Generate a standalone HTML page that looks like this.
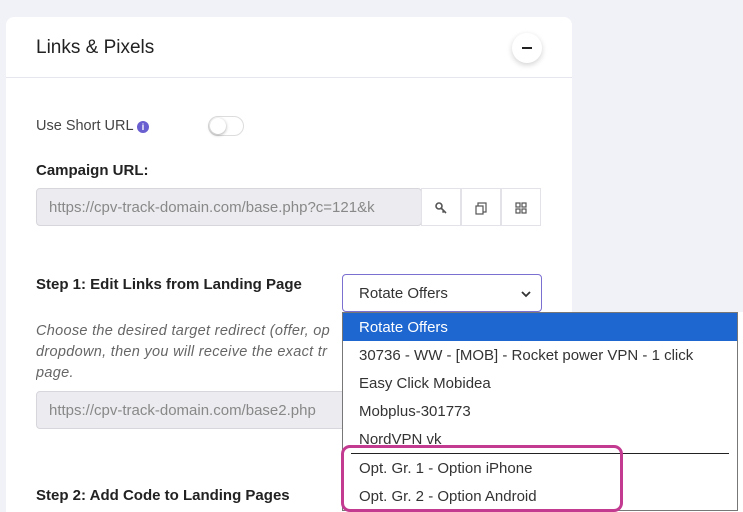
<!DOCTYPE html>
<html style="width:743px;height:512px;overflow:hidden"><head><style>
*{box-sizing:border-box;margin:0;padding:0}
body{width:743px;height:512px;overflow:hidden;background:#f1f1f8;font-family:"Liberation Sans",sans-serif;position:relative;color:#222}
.abs{position:absolute}
.card{left:6px;top:17px;width:566px;height:495px;background:#fff;border-radius:8px 8px 0 0}
.hdr{left:6px;top:77px;width:566px;height:1px;background:#e6e6ee}
.t{font-size:19px;color:#222;left:36px;top:37px}
.min{left:512px;top:33px;width:30px;height:30px;border-radius:50%;background:#fff;box-shadow:0 2px 6px rgba(0,0,0,.18)}
.min:after{content:"";position:absolute;left:10px;top:14px;width:10px;height:2px;background:#222}
.lbl{font-size:14.5px;color:#444}
.b{font-weight:bold;font-size:15px;color:#222}
.inp{background:#ececf0;border:1px solid #d6d6dc;border-radius:4px;color:#888;font-size:15px;padding:10px 12px;white-space:nowrap;overflow:hidden}
.btn{top:188px;width:40px;height:38px;border:1px solid #e2e2e8;background:#fff;color:#666;font-size:13px;text-align:center;line-height:36px}
.it{font-style:italic;color:#666;font-size:14.5px;line-height:21px;letter-spacing:.3px}
.dd{left:342px;top:312px;width:396px;height:199px;background:#fff;border:1px solid #777;overflow:hidden}
.dd div{height:28px;line-height:30px;padding-left:16px;font-size:15px;color:#333;white-space:nowrap}
</style></head><body>
<div class="abs card"></div>
<div class="abs" style="left:572px;top:312px;width:171px;height:200px;background:#fff"></div>
<div class="abs hdr"></div>
<div class="abs t">Links &amp; Pixels</div>
<div class="abs min"></div>
<div class="abs lbl" style="left:36px;top:118px">Use Short URL <span style="display:inline-block;width:12px;height:12px;border-radius:50%;background:#6a5fd0;color:#fff;font-size:9px;text-align:center;line-height:12px;font-weight:bold">i</span></div>
<div class="abs" style="left:208px;top:116px;width:36px;height:20px;border:1px solid #ddd;border-radius:10px;background:#fff"><div style="position:absolute;left:1px;top:1px;width:16px;height:16px;border-radius:50%;background:#fff;box-shadow:0 1px 3px rgba(0,0,0,.35)"></div></div>
<div class="abs b" style="left:36px;top:162px">Campaign URL:</div>
<div class="abs inp" style="left:36px;top:188px;width:386px;height:38px">https://cpv-track-domain.com/base.php?c=121&amp;k</div>
<div class="abs btn" style="left:421px">
<svg width="14" height="14" viewBox="0 0 14 14" style="margin-top:12px"><circle cx="5" cy="5" r="3" fill="none" stroke="#555" stroke-width="1.6"/><path d="M7 7l5 5M10 10l-1.5 1.5" stroke="#555" stroke-width="1.6"/></svg></div>
<div class="abs btn" style="left:461px">
<svg width="14" height="14" viewBox="0 0 14 14" style="margin-top:12px"><rect x="4" y="2" width="8" height="9" fill="none" stroke="#555" stroke-width="1.2"/><rect x="2" y="5" width="7" height="8" fill="#fff" stroke="#555" stroke-width="1.2"/></svg></div>
<div class="abs btn" style="left:501px">
<svg width="12" height="12" viewBox="0 0 12 12" style="margin-top:13px"><g fill="none" stroke="#555" stroke-width="1.2"><rect x="1" y="1" width="4" height="4"/><rect x="7" y="1" width="4" height="4"/><rect x="1" y="7" width="4" height="4"/><rect x="7" y="7" width="4" height="4"/></g></svg></div>
<div class="abs b" style="left:36px;top:276px">Step 1: Edit Links from Landing Page</div>
<div class="abs" style="left:342px;top:274px;width:200px;height:38px;border:1px solid #7b6fd0;border-radius:4px;background:#fff;font-size:15px;color:#333;padding:10px 16px">Rotate Offers<svg width="10" height="7" viewBox="0 0 10 7" style="position:absolute;right:10px;top:16px"><path d="M1 1l4 4 4-4" fill="none" stroke="#333" stroke-width="1.8"/></svg></div>
<div class="abs it" style="left:36px;top:321px;width:306px;height:64px;overflow:hidden;white-space:nowrap">Choose the desired target redirect (offer, op<br>dropdown, then you will receive the exact tr<br>page.</div>
<div class="abs inp" style="left:36px;top:391px;width:310px;height:38px">https://cpv-track-domain.com/base2.php</div>
<div class="abs b" style="left:36px;top:487px">Step 2: Add Code to Landing Pages</div>
<div class="abs dd">
<div style="background:#1e66d0;color:#fff">Rotate Offers</div>
<div>30736 - WW - [MOB] - Rocket power VPN - 1 click</div>
<div>Easy Click Mobidea</div>
<div>Mobplus-301773</div>
<div style="height:21px;overflow:hidden">NordVPN vk</div>
<div style="height:8px;padding:0;margin:0 8px;border-bottom:1px solid #222"></div>
<div>Opt. Gr. 1 - Option iPhone</div>
<div>Opt. Gr. 2 - Option Android</div>
</div>
<div class="abs" style="left:341px;top:445px;width:282px;height:67px;border:3px solid #c33a91;border-radius:9px"></div>
</body></html>
